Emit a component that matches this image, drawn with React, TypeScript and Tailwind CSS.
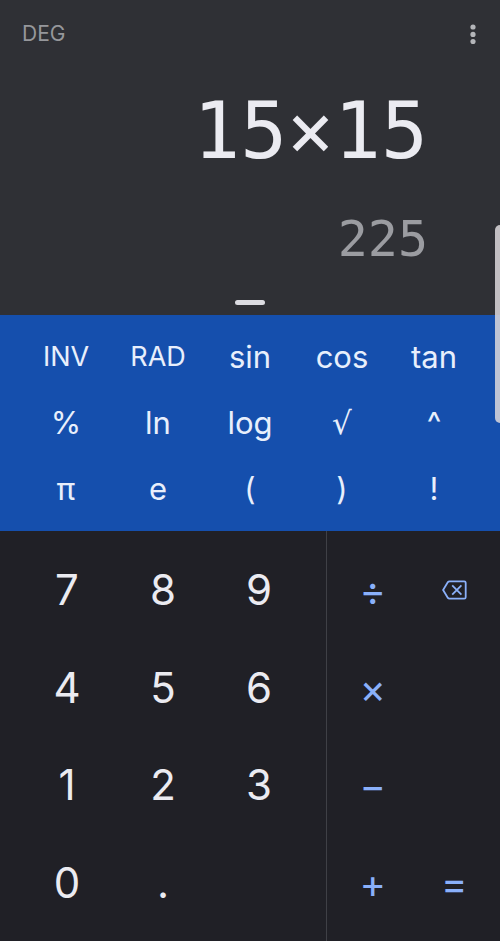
import React from "react";

type Key = { text: string; label?: string; className?: string };

const scientificKeys: Key[] = [
  { text: "INV", label: "Inverse", className: "text-[27px]" },
  { text: "RAD", label: "Radians", className: "text-[27px]" },
  { text: "sin" },
  { text: "cos" },
  { text: "tan" },
  { text: "%", label: "Percent" },
  { text: "ln" },
  { text: "log" },
  { text: "√", label: "Square root", className: "font-['DejaVu_Sans',sans-serif]" },
  { text: "^", label: "Power" },
  { text: "π", label: "Pi" },
  { text: "e" },
  { text: "(", label: "Left parenthesis" },
  { text: ")", label: "Right parenthesis" },
  { text: "!", label: "Factorial" },
];

const digitKeys = ["7", "8", "9", "4", "5", "6", "1", "2", "3", "0", "."];

function OperatorKey({ text, label }: { text: string; label: string }) {
  return (
    <button type="button" aria-label={label} className="flex items-center justify-center pt-[2px]">
      {text}
    </button>
  );
}

function BackspaceIcon() {
  return (
    <svg width="26" height="20" viewBox="0 0 26 20" fill="none" stroke="currentColor" strokeWidth="1.8" aria-hidden="true">
      <path d="M8.5 1.3h14.7a1.5 1.5 0 0 1 1.5 1.5v14.4a1.5 1.5 0 0 1-1.5 1.5H8.5a2 2 0 0 1-1.6-.8L2.1 10l4.8-7.9A2 2 0 0 1 8.5 1.3Z" />
      <path d="m11.2 5.4 9.2 9.2M20.4 5.4l-9.2 9.2" />
    </svg>
  );
}

export default function App() {
  return (
    <main className="relative flex min-h-screen flex-col overflow-hidden bg-[#202026] font-['Inter',sans-serif] text-[#ebebf1]">
      <section aria-label="Display" className="flex flex-col bg-[#2f3035]">
        <header className="flex h-[68px] items-center justify-between pr-[18px] pl-[22px]">
          <span className="text-[21px] text-[#96979b]">DEG</span>
          <button type="button" aria-label="More options" className="flex h-8 w-[18px] items-center justify-center">
            <svg width="6" height="20" viewBox="0 0 6 20" fill="#b4b5b9" aria-hidden="true">
              <circle cx="3" cy="3" r="2.6" />
              <circle cx="3" cy="10.4" r="2.6" />
              <circle cx="3" cy="17.6" r="2.6" />
            </svg>
          </button>
        </header>
        <div className="flex flex-col items-end pr-[72px] font-['DejaVu_Sans_Mono',monospace]">
          <p className="text-[78px] leading-[126px]">15×15</p>
          <output className="text-[50px] leading-[90px] text-[#9b9ca1]">225</output>
        </div>
        <div className="flex h-[31px] items-end justify-center pb-[10px]">
          <span className="h-[5px] w-[30px] rounded-full bg-[#dcdce2]" />
        </div>
      </section>

      <section
        aria-label="Scientific functions"
        className="grid grid-cols-5 bg-[#154fad] px-5 pt-[9px] pb-[9px] text-[31px] leading-[36px] text-[#e8effc]"
      >
        {scientificKeys.map(({ text, label, className = "" }) => (
          <button key={text} type="button" aria-label={label ?? text} className={`flex h-[66px] items-center justify-center ${className}`}>
            {text}
          </button>
        ))}
      </section>

      <section aria-label="Keypad" className="grid flex-1 grid-cols-[327fr_173fr]">
        <div className="grid grid-cols-3 grid-rows-4 border-r border-[#3f4046] px-[19px] pt-[10px] pb-[9px] text-[42px] leading-[48px]">
          {digitKeys.map((digit) => (
            <button key={digit} type="button" className="flex items-center justify-center">
              {digit}
            </button>
          ))}
        </div>
        <div className="grid grid-cols-2 grid-rows-4 px-[5px] pt-[10px] pb-[9px] text-[40px] leading-[44px] text-[#8ab0fa]">
          <OperatorKey text="÷" label="Divide" />
          <button type="button" aria-label="Delete" className="flex items-center justify-center">
            <BackspaceIcon />
          </button>
          <OperatorKey text="×" label="Multiply" />
          <span />
          <OperatorKey text="−" label="Subtract" />
          <span />
          <OperatorKey text="+" label="Add" />
          <OperatorKey text="=" label="Equals" />
        </div>
      </section>

      <div aria-hidden="true" className="absolute top-[225px] right-0 h-[198px] w-[5px] rounded-l-[5px] bg-[#dcd8dc]/85" />
    </main>
  );
}
